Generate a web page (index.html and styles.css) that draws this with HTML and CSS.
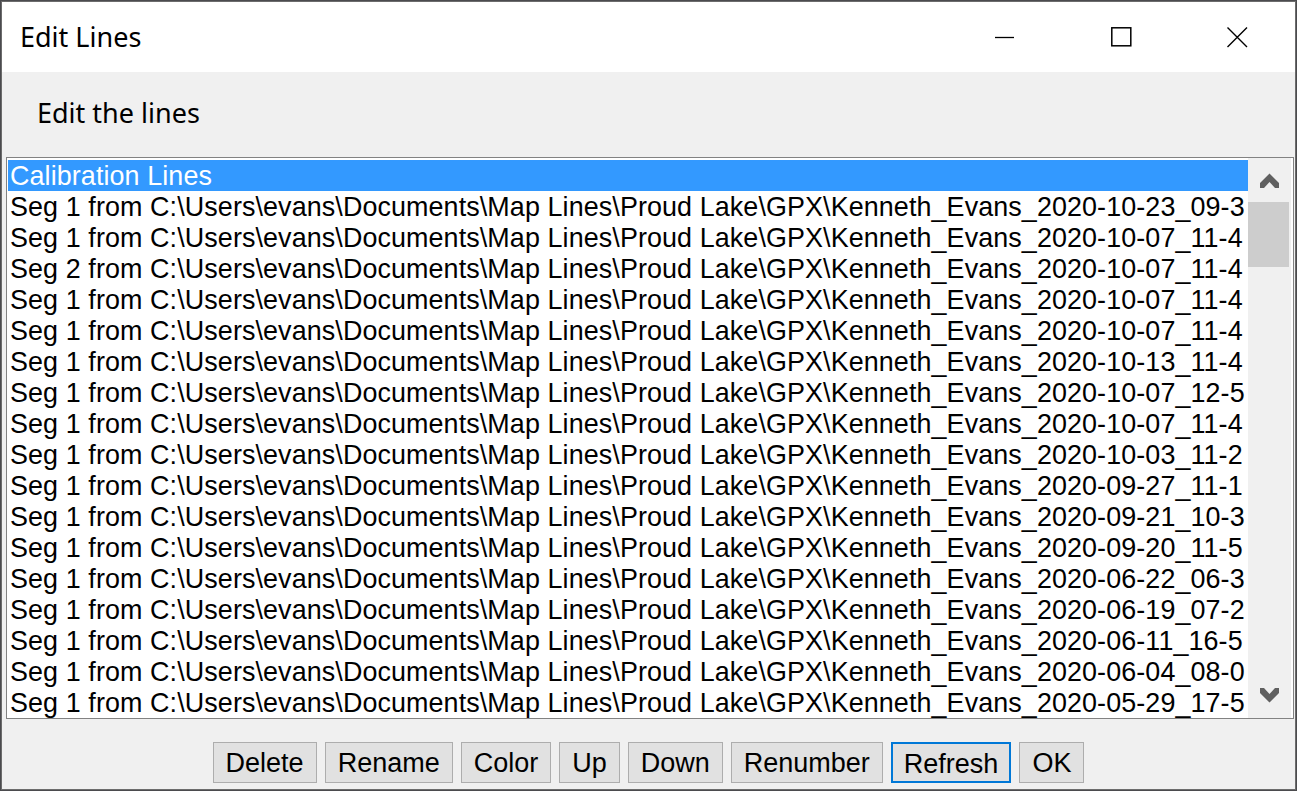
FILE: index.html
```html
<!DOCTYPE html>
<html>
<head>
<meta charset="utf-8">
<title>Edit Lines</title>
<link rel="stylesheet" href="styles.css">
</head>
<body>
<div class="window">
  <div class="titlebar">
    <div class="title">Edit Lines</div>
    <div class="caption">
      <div class="cbtn">
        <svg width="20" height="20" viewBox="0 0 20 20"><line x1="0" y1="10.5" x2="19" y2="10.5" stroke="#000" stroke-width="1.3"/></svg>
      </div>
      <div class="cbtn">
        <svg width="21" height="20" viewBox="0 0 21 20"><rect x="0.8" y="0.8" width="19" height="18" fill="none" stroke="#000" stroke-width="1.5"/></svg>
      </div>
      <div class="cbtn">
        <svg width="21" height="21" viewBox="0 0 21 21"><path d="M0.5 0.5 L20 20 M20 0.5 L0.5 20" stroke="#000" stroke-width="1.4" fill="none"/></svg>
      </div>
    </div>
  </div>
  <div class="content">
    <div class="label">Edit the lines</div>
    <div class="listbox">
      <div class="rows">
        <div class="row selected">Calibration Lines</div>
        <div class="row">Seg 1 from C:\Users\evans\Documents\Map Lines\Proud Lake\GPX\Kenneth_Evans_2020-10-23_09-3</div>
        <div class="row">Seg 1 from C:\Users\evans\Documents\Map Lines\Proud Lake\GPX\Kenneth_Evans_2020-10-07_11-4</div>
        <div class="row">Seg 2 from C:\Users\evans\Documents\Map Lines\Proud Lake\GPX\Kenneth_Evans_2020-10-07_11-4</div>
        <div class="row">Seg 1 from C:\Users\evans\Documents\Map Lines\Proud Lake\GPX\Kenneth_Evans_2020-10-07_11-4</div>
        <div class="row">Seg 1 from C:\Users\evans\Documents\Map Lines\Proud Lake\GPX\Kenneth_Evans_2020-10-07_11-4</div>
        <div class="row">Seg 1 from C:\Users\evans\Documents\Map Lines\Proud Lake\GPX\Kenneth_Evans_2020-10-13_11-4</div>
        <div class="row">Seg 1 from C:\Users\evans\Documents\Map Lines\Proud Lake\GPX\Kenneth_Evans_2020-10-07_12-5</div>
        <div class="row">Seg 1 from C:\Users\evans\Documents\Map Lines\Proud Lake\GPX\Kenneth_Evans_2020-10-07_11-4</div>
        <div class="row">Seg 1 from C:\Users\evans\Documents\Map Lines\Proud Lake\GPX\Kenneth_Evans_2020-10-03_11-2</div>
        <div class="row">Seg 1 from C:\Users\evans\Documents\Map Lines\Proud Lake\GPX\Kenneth_Evans_2020-09-27_11-1</div>
        <div class="row">Seg 1 from C:\Users\evans\Documents\Map Lines\Proud Lake\GPX\Kenneth_Evans_2020-09-21_10-3</div>
        <div class="row">Seg 1 from C:\Users\evans\Documents\Map Lines\Proud Lake\GPX\Kenneth_Evans_2020-09-20_11-5</div>
        <div class="row">Seg 1 from C:\Users\evans\Documents\Map Lines\Proud Lake\GPX\Kenneth_Evans_2020-06-22_06-3</div>
        <div class="row">Seg 1 from C:\Users\evans\Documents\Map Lines\Proud Lake\GPX\Kenneth_Evans_2020-06-19_07-2</div>
        <div class="row">Seg 1 from C:\Users\evans\Documents\Map Lines\Proud Lake\GPX\Kenneth_Evans_2020-06-11_16-5</div>
        <div class="row">Seg 1 from C:\Users\evans\Documents\Map Lines\Proud Lake\GPX\Kenneth_Evans_2020-06-04_08-0</div>
        <div class="row">Seg 1 from C:\Users\evans\Documents\Map Lines\Proud Lake\GPX\Kenneth_Evans_2020-05-29_17-5</div>
      </div>
      <div class="scrollbar">
        <div class="arrow">
          <svg width="19" height="17" viewBox="0 0 19 17"><polygon points="0,11 9.5,1.5 19,11 19,16 15,16 9.5,10 4,16 0,16" fill="#606060"/></svg>
        </div>
        <div class="track">
          <div class="thumb"></div>
        </div>
        <div class="arrow">
          <svg width="19" height="17" viewBox="0 0 19 17"><polygon points="0,5 9.5,14.5 19,5 19,0 15,0 9.5,6 4,0 0,0" fill="#606060"/></svg>
        </div>
      </div>
    </div>
    <div class="buttons">
      <button class="btn">Delete</button>
      <button class="btn">Rename</button>
      <button class="btn">Color</button>
      <button class="btn">Up</button>
      <button class="btn">Down</button>
      <button class="btn">Renumber</button>
      <button class="btn focused">Refresh</button>
      <button class="btn">OK</button>
    </div>
  </div>
</div>
</body>
</html>
```
FILE: styles.css
```css
html, body {
  margin: 0;
  padding: 0;
}
body {
  background: #4b4b4e;
  width: 1297px;
  height: 791px;
  overflow: hidden;
}
.window {
  margin: 1px 0 0 1px;
  width: 1293px;
  height: 787px;
  border: 1px solid #6c6c6c;
  background: #f0f0f0;
  display: flex;
  flex-direction: column;
}
.titlebar {
  height: 70px;
  background: #ffffff;
  display: flex;
  align-items: center;
  justify-content: space-between;
}
.title {
  font-family: "Noto Sans", "Open Sans", sans-serif;
  font-size: 27px;
  color: #000;
  padding-left: 18px;
  line-height: 72px;
}
.caption {
  display: flex;
  height: 70px;
}
.cbtn {
  width: 116px;
  height: 70px;
  display: flex;
  align-items: center;
  justify-content: center;
}
.content {
  flex: 1;
  display: flex;
  flex-direction: column;
}
.label {
  font-family: "Noto Sans", "Open Sans", sans-serif;
  font-size: 27px;
  color: #000;
  height: 40px;
  line-height: 40px;
  margin: 21px 0 24px 35px;
}
.listbox {
  margin: 0 1px 0 4px;
  height: 560px;
  border: 1px solid #828282;
  background: #fff;
  display: flex;
}
.rows {
  width: 1240px;
  padding: 2px 0 0 1px;
  overflow: hidden;
}
.row {
  height: 31px;
  line-height: 32px;
  font-family: "Liberation Sans", Arial, sans-serif;
  font-size: 26.9px;
  letter-spacing: 0.1px;
  color: #000;
  white-space: nowrap;
  overflow: hidden;
  padding-left: 2px;
}
.row.selected {
  background: #3399ff;
  color: #fff;
}
.scrollbar {
  width: 43px;
  background: #f0f0f0;
  display: flex;
  flex-direction: column;
}
.arrow {
  height: 44px;
  display: flex;
  align-items: center;
  justify-content: center;
}
.track {
  flex: 1;
}
.thumb {
  width: 41px;
  height: 65px;
  background: #cdcdcd;
}
.buttons {
  display: flex;
  justify-content: center;
  gap: 8px;
  margin-top: 23px;
  height: 41px;
}
.btn {
  height: 41px;
  margin: 0;
  padding: 0 12px;
  background: #e1e1e1;
  border: 1px solid #adadad;
  font-family: "Liberation Sans", Arial, sans-serif;
  font-size: 27px;
  color: #000;
  line-height: 40px;
}
.btn.focused {
  border: 2px solid #0078d7;
  padding: 0 11px;
}
```
